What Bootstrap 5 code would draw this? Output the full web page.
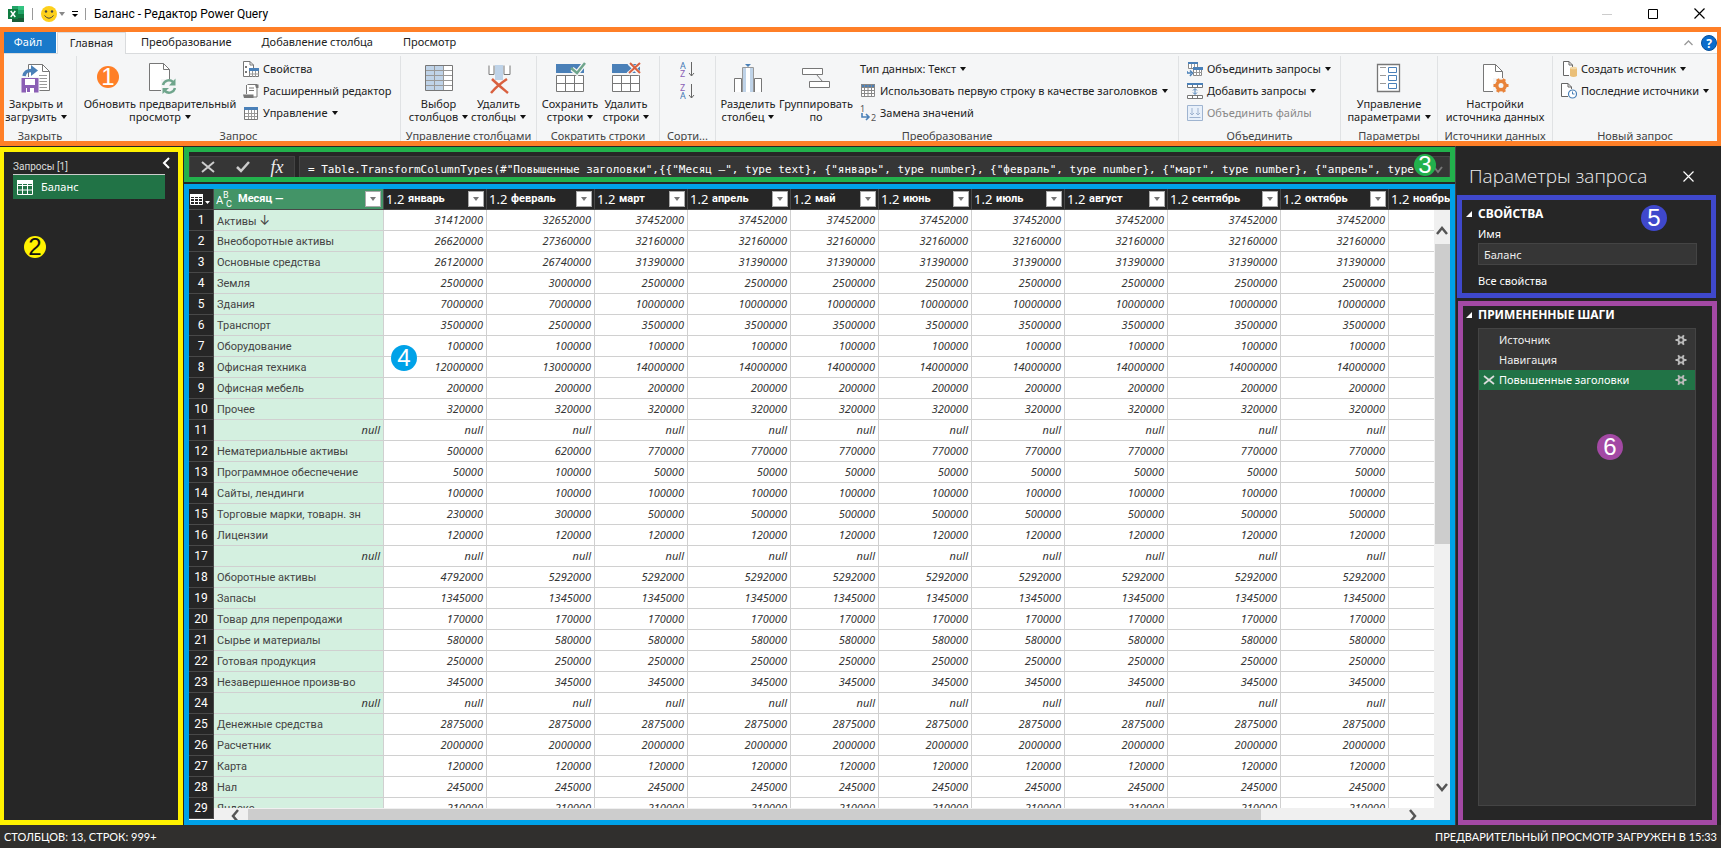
<!DOCTYPE html>
<html lang="ru">
<head>
<meta charset="utf-8">
<meta name="viewport" content="width=device-width, initial-scale=1">
<title>Баланс - Редактор Power Query</title>
<link href="https://cdn.jsdelivr.net/npm/bootstrap@5.3.0/dist/css/bootstrap.min.css" rel="stylesheet">
<style>
  body { font-family: "Noto Sans", "Liberation Sans", sans-serif; font-size: 11px; line-height: 14px; background: #262626; color: #222; }
  button { font: inherit; color: inherit; background: none; border: 0; padding: 0; }
  svg { display: block; flex: none; }
  .caret { width: 0; height: 0; border: 3px solid transparent; border-top: 4px solid #111; border-bottom: 0; display: inline-block; vertical-align: 2px; margin-left: 4px; }
  .caret.pale { border-top-color: #888; margin-left: 2px; }
  .titlebar { height: 27px; background: #fff; color: #000; font-family: Roboto, sans-serif; font-size: 12px; }
  .qat { margin: 0 6px; }
  .vline { width: 1px; height: 12px; background: #999; }
  .frame-orange { border: solid #ff7f27; border-width: 5px 4px; }
  .tabstrip { height: 22px; background: #fff; border-bottom: 1px solid #d9dbdd; }
  .tabstrip .tab { height: 22px; color: #222; text-decoration: none; text-align: center; line-height: 20px; padding: 0 15px; }
  .tabstrip .file { background: #1979ca; color: #fff; height: 21px; width: 52px; padding: 0 4px 0 0; margin-right: 1px; }
  .tabstrip .current { background: #f5f6f7; border: 1px solid #d9dbdd; border-bottom: 0; width: 69px; padding: 0; }
  .ribbon { height: 87px; background: #f5f6f7; overflow: hidden; }
  .grp { border-right: 1px solid #e0e2e4; margin-top: 2px; }
  .grp:last-child { border-right: 0; }
  .grp-body { height: 72px; padding-top: 6px; }
  .grp-label { text-align: center; color: #444; line-height: 16px; white-space: nowrap; }
  .big { width: 56px; line-height: 13px; white-space: nowrap; display: flex; flex-direction: column; align-items: center; }
  .big svg { margin-bottom: 3px; }
  .mid { width: 60px; }
  .refresh { width: 158px; }
  .group-by { width: 80px; }
  .sm { height: 22px; display: flex; align-items: center; gap: 4px; white-space: nowrap; }
  .sm:disabled { color: #888; }
  .smalls { margin-top: -4px; }
  .num { position: absolute; z-index: 5; border-radius: 50%; width: 22px; height: 22px; font: 24px/22px "Liberation Sans", sans-serif; color: #fff; text-align: center; }
  .num.wide { width: 26px; height: 26px; line-height: 26px; }
  .under { margin-top: 1px; }
  .queries { width: 183px; border: solid #fff200; border-width: 5px 5px 5px 4px; color: #ddd; padding: 0 13px 0 9px; }
  .queries-head { height: 22px; font: 10px/14px Roboto, sans-serif; margin-right: -5px; }
  .query { height: 25px; background: #217346; border-top: 1px solid #ccc; color: #fff; text-align: left; }
  .center { min-width: 0; margin-left: 1px; }
  .frame-green { height: 35px; border: 5px solid #22b14c; }
  .fx-box { width: 106px; background: #363636; border: 1px solid #444; border-bottom: 0; }
  .fx-sign { font: italic 18px/18px "Liberation Serif", serif; color: #eee; }
  .fx-input { background: #363636; border: 1px solid #444; border-width: 1px 0 0 1px; color: #fff; font: 11px/14px "DejaVu Sans Mono", monospace; padding: 6px 0 0 8px; outline: 0; min-width: 0; }
  .fx-more { width: 32px; background: #363636; border: 1px solid #444; border-width: 1px 1px 0 0; padding: 9px 6px 0 0; }
  .frame-blue { border: 5px solid #00a2e8; background: #fff; margin-top: 2px; }
  table.sheet { table-layout: fixed; border-collapse: separate; border-spacing: 0; width: 1176px; line-height: 14px; }
  .sheet th, .sheet td { height: 21px; padding: 0 2px; white-space: nowrap; overflow: hidden; border-right: 1px solid #d0d0d0; border-bottom: 1px solid #d0d0d0; }
  .sheet td { text-align: right; font-style: italic; color: #333; padding-right: 3px; }
  .sheet td.txt { text-align: left; font-style: normal; color: #444; padding: 1px 2px 0 3px; font-family: Roboto, sans-serif; }
  .sheet td:nth-child(2) { background: #d4f0e0; }
  .sheet th { background: #262626; color: #fff; border-color: #484848; }
  .sheet tbody th { font: 12px/14px Roboto, sans-serif; text-align: center; }
  .sheet thead th { font-family: Roboto, "Noto Sans", sans-serif; }
  .sheet thead th:nth-child(2) { background: #439467; }
  .sheet .arrow { font: 13px/14px Inter, sans-serif; }
  .type { font: 13px/16px "Noto Sans", sans-serif; width: 22px; }
  .filter { width: 16px; height: 16px; background: #fff; border: 1px solid #aaa; display: flex; align-items: center; justify-content: center; flex: none; }
  .filter::after { content: ""; border: 3px solid transparent; border-top: 4px solid #777; border-bottom: 0; }
  .vbar { top: 21px; right: 0; bottom: 0; width: 16px; background: #f0f0f0; padding: 16px 2px 28px; }
  .vbar .thumb { margin: 9px -2px 0 -1px; height: 53%; }
  .hbar { left: 25px; right: 16px; bottom: 0; height: 12px; background: #f0f0f0; }
  .hbar .thumb { width: 83%; height: 11px; margin-top: 1px; }
  .thumb { background: #cdcdcd; }
  .settings { width: 266px; border-left: 1px solid #444; color: #fff; }
  .settings-head { height: 49px; padding: 12px 27px 0 13px; }
  .settings h1 { font-family: "Open Sans", sans-serif; font-weight: 300; font-size: 19px; color: #eee; margin: 0; }
  .settings h2 { font-size: 12px; font-weight: 700; line-height: 16px; margin: 0; }
  .sect-head { display: flex; align-items: center; gap: 6px; padding-left: 4px; }
  .frame-indigo { border: 5px solid #3f48cc; height: 103px; margin: 0 5px 0 1px; padding: 6px 14px 0 0; }
  .frame-purple { border: 5px solid #a349a4; margin: 3px 4px 0 2px; padding: 1px 16px 0 0; }
  .frame-purple .sect-head { padding-left: 3px; }
  .steps-wrap { padding-left: 15px; }
  .name-label { display: block; padding: 5px 0 2px; }
  .name-input { background: #363636; border: 1px solid #444; color: #eee; height: 22px; padding: 0 5px; outline: 0; display: block; }
  .all-props { display: block; margin-top: 9px; color: #fff; text-decoration: none; }
  .steps { background: #363636; border: 1px solid #444; margin: 5px 0 14px; padding-top: 1px; }
  .step { height: 20px; padding: 0 8px 0 4px; color: #eee; }
  .step.on { background: #217346; color: #fff; }
  .status { height: 23px; background: #302f2d; color: #fff; font-family: Lato, "Noto Sans", sans-serif; }
  .c-orange { left: 93px; top: 34px; background: #ff7f27; }
  .c-yellow { left: 20px; top: 84px; background: #fff200; color: #111; }
  .c-green { right: 14px; top: 2px; background: #22b14c; }
  .c-blue { left: 202px; top: 156px; background: #00a2e8; }
  .c-indigo { left: 179px; top: 5px; background: #3f48cc; }
  .c-purple { left: 134px; top: 128px; background: #a349a4; }
</style>
</head>
<body class="vh-100 d-flex flex-column overflow-hidden">

<svg width="0" height="0" class="position-absolute">
  <defs>
    <symbol id="gear" viewBox="0 0 12 12"><g stroke="#bbb" stroke-width="1.9" fill="none"><circle cx="6" cy="6" r="2.6"/><path d="M0.5 6H3M9 6h2.5M3.2 1.2 4.5 3.5M8.8 1.2 7.5 3.5M3.2 10.8 4.5 8.5M8.8 10.8 7.5 8.5"/></g></symbol>
    <symbol id="tri" viewBox="0 0 6 6"><path d="M6 0V6H0Z" fill="#fff"/></symbol>
  </defs>
</svg>

<header class="titlebar d-flex align-items-center flex-shrink-0">
  <svg class="ms-2" width="16" height="16" viewBox="0 0 16 16"><path d="M4 0H16V16H4Z" fill="#21a366"/><path d="M10 0h6v4h-6Z" fill="#33c481"/><path d="M4 4h6v4H4Z" fill="#107c41"/><path d="M4 8h12v8H4Z" fill="#185c37"/><path d="M10 8h6v4h-6Z" fill="#107c41"/><path d="M0 3h10v10H0Z" fill="#107c41"/><path d="M2.700 5 7.300 11M7.300 5 2.700 11" stroke="#fff" stroke-width="1.500"/></svg>
  <span class="vline ms-2"></span>
  <button class="d-flex align-items-center ms-2" aria-label="Отправить отзыв"><svg width="16" height="16" viewBox="0 0 16 16"><circle cx="8" cy="8" r="8" fill="#fdd01c"/><circle cx="5" cy="5.500" r="1.200" fill="#444"/><circle cx="11" cy="5.500" r="1.200" fill="#444"/><path d="M3.500 9.500Q8 15 12.500 9.500" stroke="#444" fill="none"/></svg><span class="caret pale"></span></button>
  <button class="qat" aria-label="Настройка панели"><svg width="8" height="8" viewBox="0 0 8 8"><path d="M1 1.500H7" stroke="#000"/><path d="M1 4H7L4 7Z"/></svg></button>
  <span class="vline me-2"></span>
  <span class="flex-fill">Баланс - Редактор Power Query</span>
  <button aria-label="Свернуть"><svg width="10" height="10"><path d="M0 5.500H10" stroke="#ccc"/></svg></button>
  <button class="mx-4 px-2" aria-label="Развернуть"><svg class="mx-1" width="10" height="10"><path d="M.5 .5h9v9h-9z" stroke="#000" fill="none"/></svg></button>
  <button class="me-3" aria-label="Закрыть"><svg width="11" height="11"><path d="M.5 .5l10 10M10.500 .5l-10 10" stroke="#000" stroke-width="1.200"/></svg></button>
</header>

<section class="frame-orange flex-shrink-0 position-relative">
  <div class="num c-orange">1</div>
  <nav class="tabstrip d-flex">
    <a href="#" class="tab file">Файл</a>
    <a href="#" class="tab current">Главная</a>
    <a href="#" class="tab">Преобразование</a>
    <a href="#" class="tab">Добавление столбца</a>
    <a href="#" class="tab">Просмотр</a>
    <span class="flex-fill"></span>
    <button class="me-2" aria-label="Свернуть ленту"><svg width="9" height="6"><path d="M.5 5 4.500 1 8.500 5" stroke="#999" fill="none" stroke-width="1.300"/></svg></button>
    <button aria-label="Справка"><svg width="16" height="16" viewBox="0 0 16 16"><circle cx="8" cy="8" r="7.500" fill="#0a6ccc" stroke="#08509a"/><text x="8" y="12.500" font-size="12" font-weight="700" fill="#fff" text-anchor="middle">?</text></svg></button>
  </nav>

  <div class="ribbon d-flex">
    <div class="grp" style="width:73px">
      <div class="grp-body d-flex ps-1">
        <button class="big"><svg width="32" height="32" viewBox="0 0 32 32"><path d="M8.500 2.500H22.500L29.500 9.500V28.500H8.500Z" fill="#fff" stroke="#777"/><path d="M22.500 2.500V9.500H29.500" fill="none" stroke="#777"/><path d="M19 13.500h8M19 16.500h8M19 19.500h8M19 22.500h8M19 25.500h8" stroke="#999"/><path d="M1 15.500h18v15.500H1z" fill="#8b5fb5" stroke="#f5f6f7"/><path d="M5 17h10v6H5zM6 26h8v5H6z" fill="#fff"/><path d="M7 26h3v4H7z" fill="#8b5fb5"/><path d="M4 14C5 9 8 8 13 8.500" stroke="#4a80b8" stroke-width="3.500" fill="none"/><path d="M11 3l7 5.500-7 5.500z" fill="#4a80b8"/></svg>Закрыть и<span>загрузить<i class="caret"></i></span></button>
      </div>
      <div class="grp-label">Закрыть</div>
    </div>
    <div class="grp" style="width:324px">
      <div class="grp-body d-flex ps-1">
        <button class="big refresh"><svg width="32" height="32" viewBox="0 0 32 32"><path d="M5.500 1.500H19.500L25.500 7.500V28.500H5.500Z" fill="#fff" stroke="#777"/><path d="M19.500 1.500V7.500H25.500" fill="none" stroke="#777"/><path d="M17 17h16v15H17z" fill="#f5f6f7"/><path d="M19 23A6 6 0 0 1 29 20M31 26A6 6 0 0 1 21 29" stroke="#6fa58c" stroke-width="2.500" fill="none"/><path d="M31.500 16.500V23.500H25zM18.500 32V26H25z" fill="#6fa58c"/></svg>Обновить предварительный<span>просмотр<i class="caret"></i></span></button>
        <div class="smalls ms-1">
          <button class="sm"><svg width="16" height="16" viewBox="0 0 16 16"><path d="M.5 .5H7L10.500 4V15.500H.5Z" fill="#fff" stroke="#777"/><path d="M7 .5V4H10.500" fill="none" stroke="#777"/><path d="M2 5h2v2H2zM2 10h2v2H2z" fill="#777"/><path d="M6.500 8.500h9v7h-9z" fill="#fff" stroke="#777"/><path d="M6 7h10v3H6z" fill="#4a80b8"/><path d="M6 13h10M9.500 10v6M12.500 10v6" stroke="#999"/></svg>Свойства</button>
          <button class="sm"><svg width="16" height="16" viewBox="0 0 16 16"><path d="M4.500 1.500H14V14H2" fill="#fff" stroke="#777"/><path d="M3.500 2V11" stroke="#777" fill="none"/><path d="M12 1.500h3.500V5H13z" fill="#777"/><path d="M0 11.500H10.500V15H1z" fill="#777"/><path d="M6 5h5M6 7.500h5" stroke="#777"/></svg>Расширенный редактор</button>
          <button class="sm"><svg width="16" height="16" viewBox="0 0 16 16"><path d="M1.500 3.500h13v11h-13z" fill="#fff" stroke="#777"/><path d="M1 2h14v3H1z" fill="#4a80b8"/><path d="M2 8.500h12M2 11.500h12M5.500 5v9M8.500 5v9M11.500 5v9" stroke="#999"/></svg><span>Управление<i class="caret"></i></span></button>
        </div>
      </div>
      <div class="grp-label">Запрос</div>
    </div>
    <div class="grp" style="width:136px">
      <div class="grp-body d-flex justify-content-center">
        <button class="big mid"><svg width="32" height="32" viewBox="0 0 32 32"><path d="M2.500 3.500h27v25h-27z" fill="#fff"/><path d="M3 4h18v24H3z" fill="#bfd3e8"/><path d="M2.500 8.500h27M2.500 13.500h27M2.500 18.500h27M2.500 23.500h27M11.500 3v25M20.500 3v25" stroke="#999"/><path d="M2.500 3.500h27v25h-27z" fill="none" stroke="#777"/></svg>Выбор<span>столбцов<i class="caret"></i></span></button>
        <button class="big mid"><svg width="32" height="32" viewBox="0 0 32 32"><path d="M6 3.500V12.500H11V3.500M21 3.500V12.500H27V3.500" stroke="#777" fill="#fff"/><path d="M12 3h8v15h-8z" fill="#bfd3e8"/><path d="M9 17C14 22 19 26 25 31M24 17C18 21 13 25 8 31" stroke="#d9603f" stroke-width="2.500" fill="none"/></svg>Удалить<span>столбцы<i class="caret"></i></span></button>
      </div>
      <div class="grp-label">Управление столбцами</div>
    </div>
    <div class="grp" style="width:123px">
      <div class="grp-body d-flex justify-content-center">
        <button class="big"><svg width="32" height="32" viewBox="0 0 32 32"><path d="M2 2h28v9H2z" fill="#4a80b8"/><path d="M2.500 13.500h27v16h-27zM2.500 21.500h27M11.500 13.500v16M20.500 13.500v16" fill="#fff" stroke="#777"/><path d="M18 7l5 4 8-10" stroke="#f5f6f7" stroke-width="5" fill="none"/><path d="M17 6l6 5 8-10" stroke="#6fa58c" stroke-width="2.500" fill="none"/></svg>Сохранить<span>строки<i class="caret"></i></span></button>
        <button class="big"><svg width="32" height="32" viewBox="0 0 32 32"><path d="M2 2h28v9H2z" fill="#4a80b8"/><path d="M2.500 13.500h27v16h-27zM2.500 21.500h27M11.500 13.500v16M20.500 13.500v16" fill="#fff" stroke="#777"/><path d="M19 1l11 11M31 1 18 12" stroke="#f5f6f7" stroke-width="4"/><path d="M20 1l10 10M30 1 19 11" stroke="#d9603f" stroke-width="2"/></svg>Удалить<span>строки<i class="caret"></i></span></button>
      </div>
      <div class="grp-label">Сократить строки</div>
    </div>
    <div class="grp" style="width:56px">
      <div class="grp-body d-flex flex-column align-items-center gap-1">
        <button aria-label="Сортировка по возрастанию"><svg width="16" height="18" viewBox="0 0 16 18"><text x="0" y="7" font-size="9" fill="#3f78b5">A</text><text x="0" y="15" font-size="9" fill="#8b5fb5">Z</text><path d="M11.500 0V14M9 11l2.500 3 2.500-3" stroke="#666" fill="none"/></svg></button>
        <button aria-label="Сортировка по убыванию"><svg width="16" height="18" viewBox="0 0 16 18"><text x="0" y="7" font-size="9" fill="#8b5fb5">Z</text><text x="0" y="15" font-size="9" fill="#3f78b5">A</text><path d="M11.500 0V14M9 11l2.500 3 2.500-3" stroke="#666" fill="none"/></svg></button>
      </div>
      <div class="grp-label">Сорти...</div>
    </div>
    <div class="grp" style="width:463px">
      <div class="grp-body d-flex ps-1">
        <button class="big"><svg width="32" height="32" viewBox="0 0 32 32"><path d="M2.500 30V16.500H9.500V30M22.500 30V16.500H29.500V30" fill="#fff" stroke="#777"/><path d="M10.500 30V5.500H21.500V30" fill="#fff" stroke="#999"/><path d="M11 6h3v24h-3zM18 6h3v24h-3z" fill="#bfd3e8"/><path d="M13 2h6l-3 3z" fill="#4a80b8"/></svg>Разделить<span>столбец<i class="caret"></i></span></button>
        <button class="big group-by"><svg width="32" height="32" viewBox="0 0 32 32"><path d="M2.500 6.500h20v6h-20zM9.500 19.500h20v6h-20zM16.500 12.500l6 7" fill="#fff" stroke="#777"/></svg>Группировать<span>по</span></button>
        <div class="smalls ms-1">
          <button class="sm"><span>Тип данных: Текст<i class="caret"></i></span></button>
          <button class="sm"><svg width="16" height="16" viewBox="0 0 16 16"><path d="M1.500 1.500h13v12h-13z" fill="#fff"/><path d="M1 1h14v3H1z" fill="#4a80b8"/><path d="M1.500 1.500h13v12h-13zM2 4.500h12M2 7.500h12M2 10.500h12M4.500 2v12M8 2v12M11.500 2v12" fill="none" stroke="#888"/></svg><span>Использовать первую строку в качестве заголовков<i class="caret"></i></span></button>
          <button class="sm"><svg width="16" height="18" viewBox="0 0 16 18"><text x="0" y="8" font-size="9" fill="#555">1</text><text x="11" y="17" font-size="9" fill="#555">2</text><path d="M2 9v4H8M6 10l3 3-3 3" stroke="#4a80b8" stroke-width="1.600" fill="none"/></svg>Замена значений</button>
        </div>
      </div>
      <div class="grp-label">Преобразование</div>
    </div>
    <div class="grp" style="width:162px">
      <div class="grp-body ps-1">
        <div class="smalls ms-1">
          <button class="sm"><svg width="16" height="16" viewBox="0 0 16 16"><path d="M1.500 1.500h9v6h-9zM6.500 6.500h8v8h-8z" fill="#fff" stroke="#888"/><path d="M1 1h10v2H1zM6 6h10v3H6z" fill="#4a80b8"/><path d="M6 11.500h9M9.500 9v6M12.500 9v6M4.500 3v4M7.500 3v3" stroke="#999"/><path d="M0 10v2h4M3 9.500 5.500 12 3 15" stroke="#4a80b8" stroke-width="1.500" fill="none"/></svg><span>Объединить запросы<i class="caret"></i></span></button>
          <button class="sm"><svg width="16" height="16" viewBox="0 0 16 16"><path d="M.5 1.500h15v3H.5zM.5 12.500h15v3H.5zM5.500 2v2M10.500 2v2M5.500 13v2M10.500 13v2" fill="#fff" stroke="#777"/><path d="M0 0h16v2H0z" fill="#4a80b8"/><path d="M8 6v5M6 7.500l2-2 2 2M6 9.500l2 2 2-2" stroke="#4a80b8" fill="none"/></svg><span>Добавить запросы<i class="caret"></i></span></button>
          <button class="sm" disabled><svg width="16" height="16" viewBox="0 0 16 16"><path d="M.5 .5h15v15H.5z" fill="#e8f0fa" stroke="#9fb4d0"/><path d="M5 3v7M3 8l2 2 2-2M11 3v7M9 8l2 2 2-2M2.500 12.500h11" fill="none" stroke="#9fb4d0"/></svg>Объединить файлы</button>
        </div>
      </div>
      <div class="grp-label">Объединить</div>
    </div>
    <div class="grp" style="width:97px">
      <div class="grp-body d-flex justify-content-center">
        <button class="big"><svg width="32" height="32" viewBox="0 0 32 32"><path d="M4.500 2.500h22v27h-22z" fill="#fff" stroke="#777" stroke-width="1.300"/><path d="M7 5.500h6M7 13.500h6M7 21.500h6" stroke="#999"/><path d="M15.500 5.500h8v5h-8zM15.500 13.500h8v5h-8zM15.500 21.500h8v5h-8z" fill="#fff" stroke="#4a80b8"/></svg>Управление<span>параметрами<i class="caret"></i></span></button>
      </div>
      <div class="grp-label">Параметры</div>
    </div>
    <div class="grp" style="width:115px">
      <div class="grp-body d-flex justify-content-center">
        <button class="big"><svg width="32" height="32" viewBox="0 0 32 32"><path d="M4.500 2.500H16.500L23.500 9.500V29.500H4.500Z" fill="#fff" stroke="#777"/><path d="M16.500 2.500V9.500H23.500" fill="none" stroke="#777"/><path d="M14 16h17v16H14z" fill="#f5f6f7"/><circle cx="22" cy="23.500" r="4.200" fill="none" stroke="#e8833a" stroke-width="3.400"/><path d="M14.500 23.500h3M26.500 23.500h3M18.500 17l1.500 3M25.500 17l-1.500 3M18.500 30l1.500-3M25.500 30l-1.500-3" stroke="#e8833a" stroke-width="3.200"/></svg>Настройки<span>источника данных</span></button>
      </div>
      <div class="grp-label">Источники данных</div>
    </div>
    <div class="grp flex-fill">
      <div class="grp-body ps-1">
        <div class="smalls ms-1">
          <button class="sm"><svg width="16" height="16" viewBox="0 0 16 16"><path d="M8 14.500H2.500V.5H8L11.500 4V6" fill="#fff" stroke="#666"/><path d="M8 .5V4H11.500" fill="none" stroke="#666"/><path d="M9 7h7v8q-3.500 2-7 0z" fill="#eabf78"/><ellipse cx="12.500" cy="7" rx="3.500" ry="1.300" fill="#f3d9a8"/></svg><span>Создать источник<i class="caret"></i></span></button>
          <button class="sm"><svg width="16" height="16" viewBox="0 0 16 16"><path d="M7 13.500H.5V.5H7L10.500 4V6" fill="#fff" stroke="#666"/><path d="M7 .5V4H10.500" fill="none" stroke="#666"/><circle cx="11.500" cy="11" r="4" fill="#fff" stroke="#4a80b8" stroke-width="1.200"/><path d="M11.500 8.500V11h2" fill="none" stroke="#4a80b8"/></svg><span>Последние источники<i class="caret"></i></span></button>
        </div>
      </div>
      <div class="grp-label">Новый запрос</div>
    </div>
  </div>
</section>

<main class="d-flex flex-fill overflow-hidden">
  <aside class="queries under flex-shrink-0 position-relative">
    <div class="num c-yellow">2</div>
    <div class="queries-head d-flex align-items-end">
      <span class="flex-fill">Запросы [1]</span>
      <button class="align-self-center" aria-label="Свернуть"><svg width="8" height="12"><path d="M7 1 2 6l5 5" stroke="#fff" stroke-width="2" fill="none"/></svg></button>
    </div>
    <button class="query d-flex align-items-center w-100 ps-1 gap-2"><svg width="16" height="15"><path d="M.5 .5h15v14H.5zM.5 5.500h15M.5 10h15M5.500 4v11M10.500 4v11" fill="none" stroke="#fff"/><path d="M0 0h16v4H0z" fill="#fff"/></svg>Баланс</button>
  </aside>

  <section class="center under flex-fill d-flex flex-column">
    <div class="frame-green d-flex pt-1 position-relative">
      <div class="num c-green">3</div>
      <div class="fx-box d-flex align-items-center justify-content-around me-1">
        <button aria-label="Отмена"><svg width="14" height="12"><path d="M1 1l12 10M13 1 1 11" stroke="#ccc" stroke-width="2"/></svg></button>
        <button aria-label="Принять"><svg width="14" height="12"><path d="M1 6l4 4 8-9" stroke="#ccc" stroke-width="2.500" fill="none"/></svg></button>
        <button class="fx-sign" aria-label="Функция">fx</button>
      </div>
      <input class="fx-input flex-fill" aria-label="Формула" value='= Table.TransformColumnTypes(#"Повышенные заголовки",{{"Месяц —", type text}, {"январь", type number}, {"февраль", type number}, {"март", type number}, {"апрель", type '>
      <button class="fx-more d-flex justify-content-end" aria-label="Развернуть строку формул"><svg width="10" height="8"><path d="M1 1l4 5 4-5" stroke="#777" stroke-width="2" fill="none"/></svg></button>
    </div>
    <div class="frame-blue flex-fill overflow-hidden position-relative">
      <div class="num wide c-blue">4</div>
      <table class="sheet"><colgroup id="cols"></colgroup><thead><tr id="head"></tr></thead><tbody id="rows"></tbody></table>
      <div class="vbar position-absolute d-flex flex-column">
        <svg width="12" height="9"><path d="M1 8 6 2l5 6" stroke="#555" stroke-width="2.500" fill="none"/></svg>
        <div class="thumb"></div>
        <div class="flex-fill"></div>
        <svg width="12" height="9"><path d="M1 1l5 6 5-6" stroke="#555" stroke-width="2.500" fill="none"/></svg>
      </div>
      <div class="hbar position-absolute d-flex align-items-center overflow-hidden">
        <svg class="ms-3 me-2" width="10" height="12"><path d="M8 2 3 8l5 6" stroke="#555" stroke-width="2.500" fill="none"/></svg>
        <div class="thumb"></div>
        <div class="flex-fill"></div>
        <svg class="me-3" width="10" height="12"><path d="M2 2l5 6-5 6" stroke="#555" stroke-width="2.500" fill="none"/></svg>
      </div>
    </div>
  </section>

  <aside class="settings flex-shrink-0 d-flex flex-column">
    <div class="settings-head d-flex align-items-center">
      <h1 class="flex-fill">Параметры запроса</h1>
      <button aria-label="Закрыть"><svg width="11" height="11"><path d="M.5 .5l10 10M10.500 .5l-10 10" stroke="#fff" stroke-width="1.200"/></svg></button>
    </div>
    <section class="frame-indigo position-relative flex-shrink-0">
      <div class="num wide c-indigo">5</div>
      <div class="sect-head"><svg width="6" height="6"><use href="#tri"/></svg><h2>СВОЙСТВА</h2></div>
      <div class="ps-3">
        <label for="qname" class="name-label">Имя</label>
        <input id="qname" class="name-input w-100" value="Баланс">
        <a href="#" class="all-props">Все свойства</a>
      </div>
    </section>
    <section class="frame-purple position-relative flex-fill d-flex flex-column">
      <div class="num wide c-purple">6</div>
      <div class="sect-head"><svg width="6" height="6"><use href="#tri"/></svg><h2>ПРИМЕНЕННЫЕ ШАГИ</h2></div>
      <div class="steps-wrap flex-fill d-flex flex-column">
        <div class="steps flex-fill">
          <div class="step d-flex align-items-center"><span class="flex-fill ps-3">Источник</span><svg width="12" height="12"><use href="#gear"/></svg></div>
          <div class="step d-flex align-items-center"><span class="flex-fill ps-3">Навигация</span><svg width="12" height="12"><use href="#gear"/></svg></div>
          <div class="step on d-flex align-items-center"><svg width="12" height="10"><path d="M1 1l10 8M11 1 1 9" stroke="#ddd" stroke-width="1.700"/></svg><span class="flex-fill ps-1">Повышенные заголовки</span><svg width="12" height="12"><use href="#gear"/></svg></div>
        </div>
      </div>
    </section>
  </aside>
</main>

<footer class="status d-flex align-items-center justify-content-between px-1 flex-shrink-0">
  <span>СТОЛБЦОВ: 13, СТРОК: 999+</span><span>ПРЕДВАРИТЕЛЬНЫЙ ПРОСМОТР ЗАГРУЖЕН В 15:33</span>
</footer>

<script src="https://cdn.jsdelivr.net/npm/bootstrap@5.3.0/dist/js/bootstrap.bundle.min.js"></script>
<script>
  const months = ["январь","февраль","март","апрель","май","июнь","июль","август","сентябрь","октябрь","ноябрь"];
  const widths = [25,170,103,108,93,103,88,93,93,103,113,108,103];
  // label, January, February, value of every later month
  const data = [
    ["Активы <span class='arrow'>↓</span>",31412000,32652000,37452000],["Внеоборотные активы",26620000,27360000,32160000],["Основные средства",26120000,26740000,31390000],
    ["Земля",2500000,3000000,2500000],["Здания",7000000,7000000,10000000],["Транспорт",3500000,2500000,3500000],["Оборудование",100000,100000,100000],
    ["Офисная техника",12000000,13000000,14000000],["Офисная мебель",200000,200000,200000],["Прочее",320000,320000,320000],[null,null,null,null],
    ["Нематериальные активы",500000,620000,770000],["Программное обеспечение",50000,100000,50000],["Сайты, лендинги",100000,100000,100000],
    ["Торговые марки, товарн. зн",230000,300000,500000],["Лицензии",120000,120000,120000],[null,null,null,null],["Оборотные активы",4792000,5292000,5292000],
    ["Запасы",1345000,1345000,1345000],["Товар для перепродажи",170000,170000,170000],["Сырье и материалы",580000,580000,580000],
    ["Готовая продукция",250000,250000,250000],["Незавершенное произв-во",345000,345000,345000],[null,null,null,null],
    ["Денежные средства",2875000,2875000,2875000],["Расчетник",2000000,2000000,2000000],["Карта",120000,120000,120000],["Нал",245000,245000,245000],["Яндекс",210000,210000,210000]
  ];
  const filter = '<button class="filter" aria-label="Фильтр"></button>';
  const abc = '<svg width="18" height="18" viewBox="0 0 18 18" fill="#fff" font-weight="400"><text x="0" y="14" font-size="11">A</text><text x="7" y="8" font-size="9">B</text><text x="10" y="17" font-size="9">C</text></svg>';
  const byId = id => document.getElementById(id);
  byId("cols").innerHTML = widths.map(w => `<col style="width:${w}px">`).join("");
  byId("head").innerHTML = '<th class="p-0"><svg width="22" height="12"><path d="M1.500 1.500h12v10h-12zM1.500 5.500h12M1.500 8.500h12M5.500 4v8M9.500 4v8" fill="none" stroke="#fff"/><path d="M1 1h13v3H1zM16 8h5l-2.500 3z" fill="#fff"/></svg></th>'
    + `<th><div class="d-flex align-items-center">${abc}<span class="flex-fill ps-1">Месяц —</span>${filter}</div></th>`
    + months.map(m => `<th><div class="d-flex align-items-center"><span class="type">1.2</span><span class="flex-fill">${m}</span>${filter}</div></th>`).join("");
  byId("rows").innerHTML = data.map((r, i) => {
    const vals = [r[1], r[2], ...Array(9).fill(r[3])];
    return `<tr><th>${i + 1}</th><td class="${r[0] ? "txt" : ""}">${r[0]}</td>` + vals.map(v => `<td>${v}</td>`).join("") + "</tr>";
  }).join("");
</script>
</body>
</html>
